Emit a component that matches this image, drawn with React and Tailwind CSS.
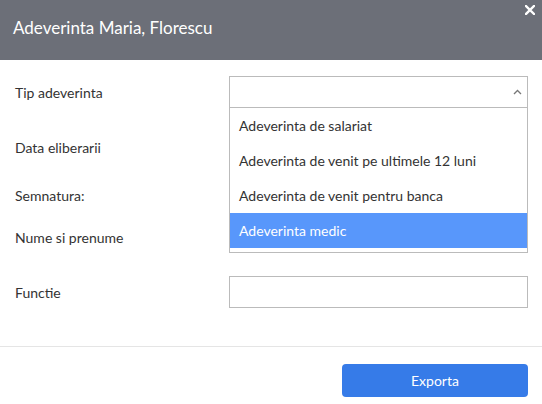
import React from "react";

const font = { fontFamily: "Lato, 'Noto Sans', sans-serif" };

function Row({ label, children, className = "" }) {
  return (
    <div className={`flex items-center ${className}`}>
      <div className="w-[214px] shrink-0 text-[14px] text-[#333]">{label}</div>
      <div className="w-[299px]">{children}</div>
    </div>
  );
}

export default function App() {
  const options = [
    "Adeverinta de salariat",
    "Adeverinta de venit pe ultimele 12 luni",
    "Adeverinta de venit pentru banca",
    "Adeverinta medic",
  ];
  return (
    <div className="w-[542px] h-[404px] bg-white relative overflow-hidden" style={font}>
      <div className="h-[60px] bg-[#6c6f78] flex items-center pl-[13px] relative">
        <span className="text-white text-[17px] leading-none -mt-[6px]">Adeverinta Maria, Florescu</span>
        <svg className="absolute left-[525px] top-[5px]" width="10" height="10" viewBox="0 0 10 10">
          <path d="M1 1L9 9M9 1L1 9" stroke="white" strokeWidth="2.4" strokeLinecap="square" />
        </svg>
      </div>
      <div className="pl-[15px] pt-[16px] h-[287px] border-b border-[#e5e5e5]">
        <Row label="Tip adeverinta" className="h-[32px]">
          <div className="relative">
            <div className="h-[32px] border border-[#bbb] flex items-center justify-end pr-[5px]">
              <svg width="9" height="6" viewBox="0 0 9 6">
                <path d="M1 5L4.5 1.5L8 5" stroke="#777" strokeWidth="1.3" fill="none" />
              </svg>
            </div>
            <div className="absolute left-0 top-[32px] w-[299px] bg-white border border-t-0 border-[#bbb] pb-[4px] z-10">
              {options.map((o, i) => (
                <div
                  key={o}
                  className={`h-[35px] flex items-center pl-[9px] text-[14px] ${
                    i === 3 ? "bg-[#5897fb] text-white" : "text-[#333]"
                  }`}
                >
                  {o}
                </div>
              ))}
            </div>
          </div>
        </Row>
        <Row label="Data eliberarii" className="h-[32px] mt-[23px]">
          <div className="h-[32px] border border-[#bbb]" />
        </Row>
        <Row label="Semnatura:" className="h-[20px] mt-[22px]">
          <div />
        </Row>
        <Row label="Nume si prenume" className="h-[32px] mt-[16px]">
          <div className="h-[32px] border border-[#bbb]" />
        </Row>
        <Row label="Functie" className="h-[32px] mt-[23px]">
          <div className="h-[32px] border border-[#bbb]" />
        </Row>
      </div>
      <div className="flex justify-end pr-[14px] pt-[17px]">
        <button className="w-[186px] h-[33px] rounded-[4px] bg-[#367be8] text-white text-[14px]">
          Exporta
        </button>
      </div>
    </div>
  );
}
